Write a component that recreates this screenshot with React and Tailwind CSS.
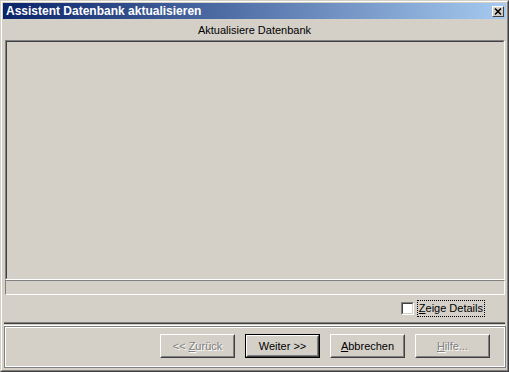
function Btn({ children, disabled, isDefault }) {
  const face = (
    <div className="h-full w-full border border-t-white border-l-white border-r-[#404040] border-b-[#404040]">
      <div className="flex h-full w-full items-center justify-center border border-t-[#d4d0c8] border-l-[#d4d0c8] border-r-[#808080] border-b-[#808080]">
        <span
          className={disabled ? 'text-[#808080] [text-shadow:1px_1px_0_#ffffff]' : 'text-black'}
        >
          {children}
        </span>
      </div>
    </div>
  )
  return (
    <div className={`h-[24px] w-[75px] ${isDefault ? 'border border-black' : ''}`}>
      {face}
    </div>
  )
}

export default function App() {
  return (
    <div className="w-[509px] h-[372px] bg-[#d4d0c8] font-['Liberation_Sans',Arial,sans-serif] text-[11px] leading-none text-black select-none">
      {/* outer frame */}
      <div className="h-full w-full border border-t-[#d4d0c8] border-l-[#d4d0c8] border-r-[#404040] border-b-[#404040]">
        <div className="flex h-full w-full flex-col border border-t-white border-l-white border-r-[#808080] border-b-[#808080] p-px">
          {/* Title bar */}
          <div className="flex h-[16px] items-center justify-between bg-[linear-gradient(90deg,#0a246a,#a6caf0)] pl-[3px] pr-[2px]">
            <span className="text-[12px] font-bold text-white">Assistent Datenbank aktualisieren</span>
            <div className="h-[11px] w-[12px] border border-t-white border-l-white border-r-[#404040] border-b-[#404040] bg-[#d4d0c8] flex items-center justify-center">
              <svg width="8" height="7" viewBox="0 0 8 7">
                <path d="M1 0.5 L7 6.5 M7 0.5 L1 6.5" stroke="black" strokeWidth="1.5" />
              </svg>
            </div>
          </div>

          {/* Body */}
          <div className="flex flex-1 flex-col">
            <div className="flex h-[21px] items-center justify-center pt-[2px]">Aktualisiere Datenbank</div>

            <div className="ml-[2px] mr-px h-[240px] border border-t-[#808080] border-l-[#808080] border-r-white border-b-white">
              <div className="h-full w-full border border-t-[#404040] border-l-[#404040] border-r-[#d4d0c8] border-b-[#d4d0c8]" />
            </div>

            <div className="ml-[2px] mr-px h-[15px] border border-t-[#808080] border-l-[#808080] border-r-white border-b-white" />

            {/* Checkbox row */}
            <div className="flex h-[27px] items-center justify-end pr-[21px]">
              <div className="h-[13px] w-[13px] border border-t-[#808080] border-l-[#808080] border-r-white border-b-white">
                <div className="h-full w-full border border-t-[#404040] border-l-[#404040] border-r-[#d4d0c8] border-b-[#d4d0c8] bg-white" />
              </div>
              <div className="ml-[3px] border border-dotted border-black px-px py-[2px]">
                <span className="underline">Z</span>eige Details
              </div>
            </div>

            {/* Separator */}
            <div className="mx-px h-px bg-[#808080]" />
            <div className="mx-px h-px bg-[#404040]" />
            <div className="mx-px h-px bg-[#d4d0c8]" />
            <div className="mx-px h-px bg-white" />

            {/* Button box */}
            <div className="ml-px mr-0 h-[42px] border border-[#808080]">
              <div className="flex h-full w-full items-start justify-end gap-[10px] border border-white pt-[6px] pr-[14px]">
                <Btn disabled>
                  &lt;&lt; <span className="underline">Z</span>urück
                </Btn>
                <Btn isDefault>Weiter &gt;&gt;</Btn>
                <Btn>
                  <span className="underline">A</span>bbrechen
                </Btn>
                <Btn disabled>
                  <span className="underline">H</span>ilfe...
                </Btn>
              </div>
            </div>
          </div>
        </div>
      </div>
    </div>
  )
}
